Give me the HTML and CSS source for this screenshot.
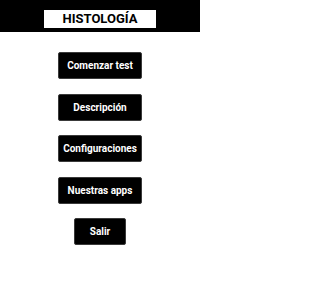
FILE: index.html
```html
<!DOCTYPE html>
<html lang="es">
<head>
<meta charset="utf-8">
<title>Histología</title>
<link rel="stylesheet" href="styles.css">
</head>
<body>
<div class="screen">
  <header class="topbar">
    <h1 class="title">HISTOLOGÍA</h1>
  </header>
  <nav class="menu">
    <button class="btn">Comenzar test</button>
    <button class="btn">Descripción</button>
    <button class="btn">Configuraciones</button>
    <button class="btn">Nuestras apps</button>
    <button class="btn btn-small">Salir</button>
  </nav>
</div>
</body>
</html>
```
FILE: styles.css
```css
html, body {
  margin: 0;
  padding: 0;
  background: #ffffff;
  font-family: Roboto, "Liberation Sans", sans-serif;
}
.screen {
  width: 200px;
  height: 300px;
}
.topbar {
  background: #000000;
  height: 32px;
  padding-top: 10px;
  box-sizing: border-box;
  display: flex;
  justify-content: center;
}
.title {
  margin: 0;
  width: 112px;
  height: 17.5px;
  background: #ffffff;
  color: #000000;
  font-size: 13px;
  font-weight: 700;
  line-height: 18px;
  text-align: center;
}
.menu {
  display: flex;
  flex-direction: column;
  align-items: center;
  gap: 14.5px;
  padding-top: 20px;
}
.btn {
  width: 84px;
  height: 27px;
  padding: 0;
  background: #000000;
  color: #ffffff;
  border: 1px solid #3a3a3a;
  border-radius: 2px;
  font-family: Roboto, "Liberation Sans", sans-serif;
  font-size: 10px;
  font-weight: 700;
  line-height: 25px;
  text-align: center;
  white-space: nowrap;
}
.btn-small {
  width: 52px;
}
```
